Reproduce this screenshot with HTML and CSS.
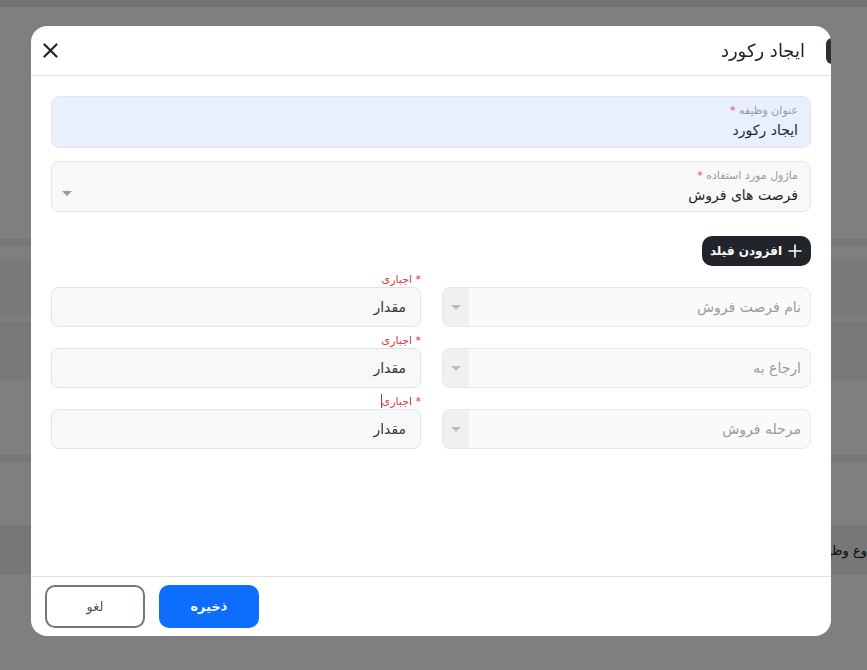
FILE: index.html
```html
<!DOCTYPE html>
<html lang="fa" dir="rtl">
  <head>
    <meta charset="UTF-8" />
    <meta name="viewport" content="width=device-width, initial-scale=1.0" />
    <title>ایجاد رکورد</title>
    <link rel="stylesheet" href="styles.css">
  </head>

  <body>
    <div class="page">
      <div class="topbar"></div>
      <div class="band band-a"></div>
      <div class="row row-a"></div>
      <div class="row row-b"></div>
      <div class="band band-b"></div>
      <div class="row row-c"><span>وع وظیفه</span></div>
    </div>

    <div class="overlay">
      <div class="modal">
        <div class="modal-header">
          <h2 class="modal-title">ایجاد رکورد</h2>
          <button type="button" class="close">
            <svg width="15" height="15" viewBox="0 0 15 15">
              <path d="M1.5 1.5 L13.5 13.5 M13.5 1.5 L1.5 13.5" stroke="#212529" stroke-width="2.2" stroke-linecap="round" />
            </svg>
          </button>
          <div class="peek"></div>
        </div>

        <div class="modal-body">
          <div class="field autofill">
            <div class="field-label">عنوان وظیفه <span class="star">*</span></div>
            <div class="field-value">ایجاد رکورد</div>
          </div>

          <div class="field">
            <div class="field-label">ماژول مورد استفاده <span class="star">*</span></div>
            <div class="field-value">فرصت های فروش</div>
            <span class="caret"></span>
          </div>

          <div class="actions">
            <button type="button" class="add">
              <svg width="14" height="14" viewBox="0 0 14 14">
                <path d="M7 0.5 V13.5 M0.5 7 H13.5" stroke="#fff" stroke-width="1.6" />
              </svg>
              افزودن فیلد
            </button>
          </div>

          <div class="pairs">
            <div class="pair">
              <div class="select">
                <span class="placeholder">نام فرصت فروش</span>
                <span class="select-arrow"><span class="caret"></span></span>
              </div>
              <div class="value-box">
                <div class="required">* اجباری</div>
                <div class="input">مقدار</div>
              </div>
            </div>

            <div class="pair">
              <div class="select">
                <span class="placeholder">ارجاع به</span>
                <span class="select-arrow"><span class="caret"></span></span>
              </div>
              <div class="value-box">
                <div class="required">* اجباری</div>
                <div class="input">مقدار</div>
              </div>
            </div>

            <div class="pair">
              <div class="select">
                <span class="placeholder">مرحله فروش</span>
                <span class="select-arrow"><span class="caret"></span></span>
              </div>
              <div class="value-box">
                <div class="required">* اجباری<span class="cursor"></span></div>
                <div class="input">مقدار</div>
              </div>
            </div>
          </div>
        </div>

        <div class="modal-footer">
          <button type="button" class="btn btn-save">ذخیره</button>
          <button type="button" class="btn btn-cancel">لغو</button>
        </div>
      </div>
    </div>
  </body>
</html>
```

FILE: styles.css
```css
* {
  box-sizing: border-box;
}

body {
  margin: 0;
  font-family: "DejaVu Sans", sans-serif;
  background: #fff;
  overflow: hidden;
}

/* page behind the dialog */
.page {
  height: 670px;
}

.topbar {
  height: 7px;
  background: #e4e4e4;
}

.band {
  height: 7px;
  background: #eeeeee;
}

.band-a {
  margin-top: 232px;
}

.band-b {
  margin-top: 75px;
}

.row-a {
  margin-top: 14px;
  height: 56px;
  background: #f3f3f3;
}

.row-b {
  margin-top: 6px;
  height: 58px;
  background: #f1f1f1;
}

.row-c {
  margin-top: 63px;
  height: 50px;
  background: #eeeeee;
  display: flex;
  align-items: center;
  font-size: 13px;
  color: #222;
}

/* dialog */
.overlay {
  position: fixed;
  inset: 0;
  background: rgba(0, 0, 0, 0.5);
  display: flex;
  justify-content: flex-end;
  align-items: flex-start;
  padding: 26px 31px 0 0;
  direction: ltr;
}

.modal {
  direction: rtl;
  width: 800px;
  height: 610px;
  background: #fff;
  border-radius: 16px;
  overflow: hidden;
  display: flex;
  flex-direction: column;
  margin-right: 5px;
}

.modal-header {
  position: relative;
  height: 50px;
  flex: none;
  display: flex;
  align-items: center;
  justify-content: space-between;
  padding: 0 26px 0 12px;
  border-bottom: 1px solid #dee2e6;
}

.modal-title {
  margin: 0;
  font-size: 18px;
  font-weight: normal;
  color: #212529;
}

.close {
  background: none;
  border: none;
  padding: 0;
  width: 15px;
  height: 15px;
  display: flex;
}

.peek {
  position: absolute;
  top: 12px;
  right: -20px;
  width: 25px;
  height: 26px;
  border-radius: 6px;
  background: #2b2f36;
}

.modal-body {
  flex: 1;
  padding: 20px 20px 0;
}

.field {
  position: relative;
  height: 52px;
  border: 1px solid #e3e5e8;
  border-radius: 8px;
  background: #f8f8f8;
  padding: 7px 12px 0;
  margin-bottom: 13px;
}

.field + .field {
  height: 51px;
}

.field.autofill {
  background: #e8f0fe;
}

.field-label {
  font-size: 11px;
  line-height: 14px;
  color: #9a9a9a;
}

.star {
  color: #e84a5f;
}

.field-value {
  font-size: 14px;
  line-height: 24px;
  color: #212529;
}

.caret {
  display: inline-block;
  width: 0;
  height: 0;
  border-left: 5px solid transparent;
  border-right: 5px solid transparent;
  border-top: 5px solid #9a9a9a;
}

.field .caret {
  position: absolute;
  left: 10px;
  top: 29px;
}

.actions {
  display: flex;
  margin-top: 24px;
}

.add {
  display: flex;
  align-items: center;
  gap: 6px;
  height: 30px;
  padding: 0 9px 0 8px;
  border: none;
  border-radius: 10px;
  background: #212529;
  color: #fff;
  font-family: inherit;
  font-size: 12px;
  font-weight: bold;
}

.pairs {
  margin-top: 5px;
}

.pair {
  display: grid;
  grid-template-columns: 369px 370px;
  column-gap: 21px;
  align-items: end;
  margin-bottom: 5px;
}

.select {
  height: 40px;
  border: 1px solid #e5e7ea;
  border-radius: 8px;
  background: #fafafa;
  display: flex;
  align-items: center;
  justify-content: space-between;
  overflow: hidden;
}

.placeholder {
  padding-right: 9px;
  font-size: 14px;
  color: #9a9a9a;
}

.select-arrow {
  width: 26px;
  height: 100%;
  background: #f0f0f0;
  display: flex;
  align-items: center;
  justify-content: center;
}

.select-arrow .caret {
  border-top-color: #bdbdbd;
}

.required {
  position: relative;
  display: flex;
  height: 16px;
  align-items: center;
  font-size: 11px;
  color: #dc3545;
}

.cursor {
  display: inline-block;
  width: 1px;
  height: 14px;
  background: #c0392b;
}

.input {
  height: 40px;
  border: 1px solid #dfe2e6;
  border-radius: 8px;
  background: #f8f8f9;
  display: flex;
  align-items: center;
  padding-right: 14px;
  font-size: 14px;
  color: #333;
}

.modal-footer {
  flex: none;
  height: 60px;
  border-top: 1px solid #dee2e6;
  display: flex;
  justify-content: flex-end;
  align-items: flex-start;
  gap: 14px;
  padding: 8px 14px 0;
}

.btn {
  width: 100px;
  height: 43px;
  border-radius: 10px;
  font-family: inherit;
  font-size: 13px;
}

.btn-save {
  border: none;
  background: #0d6efd;
  color: #fff;
  font-weight: bold;
}

.btn-cancel {
  border: 2px solid #6c7a7a;
  background: #fff;
  color: #555;
}
```
